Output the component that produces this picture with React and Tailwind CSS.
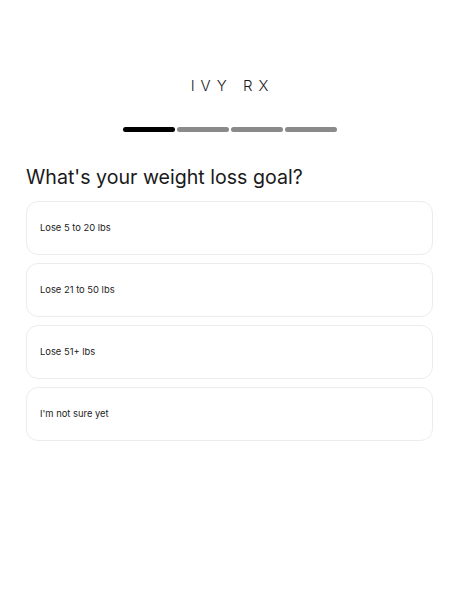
const options = [
  "Lose 5 to 20 lbs",
  "Lose 21 to 50 lbs",
  "Lose 51+ lbs",
  "I'm not sure yet",
];

export default function App() {
  return (
    <div
      className="min-h-[600px] w-[450px] bg-white text-[#1a1a1a]"
      style={{ fontFamily: "Inter, 'Noto Sans', sans-serif" }}
    >
      <div className="ml-[26px] w-[407px] pt-[78px]">
        {/* Logo */}
        <div className="flex justify-center">
          <p className="text-[15px] leading-[16px] tracking-[0.4em] pl-[0.4em] font-light">
            IVY RX
          </p>
        </div>

        {/* Progress */}
        <div className="mt-[33px] flex justify-center gap-[2px]">
          <span className="h-[5px] w-[52px] rounded-full bg-black" />
          <span className="h-[5px] w-[52px] rounded-full bg-[#8a8a8a]" />
          <span className="h-[5px] w-[52px] rounded-full bg-[#8a8a8a]" />
          <span className="h-[5px] w-[52px] rounded-full bg-[#8a8a8a]" />
        </div>

        {/* Question */}
        <h1 className="mt-[30px] text-[19.6px] leading-[30px] font-normal">
          What's your weight loss goal?
        </h1>

        <div className="mt-[9px] flex flex-col gap-[8px]">
          {options.map((o) => (
            <button
              key={o}
              className="flex h-[54px] items-center rounded-[12px] border border-[#ececec] bg-white px-[13px] text-left text-[9.4px] text-[#222]"
            >
              {o}
            </button>
          ))}
        </div>
      </div>
    </div>
  );
}
